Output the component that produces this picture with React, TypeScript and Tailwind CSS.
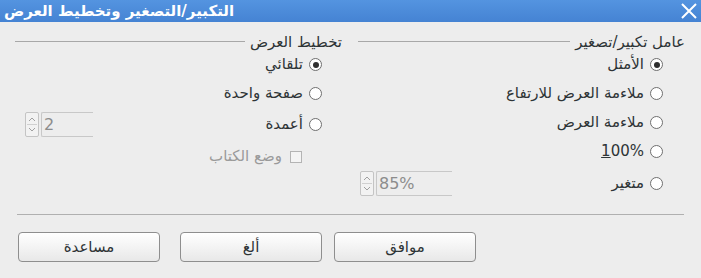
import React from 'react';

const font = { fontFamily: '"DejaVu Sans", "Noto Sans", sans-serif' };

function Radio({ checked }: { checked?: boolean }) {
	return (
		<span className="w-[13px] h-[13px] rounded-full border border-[#6f6f6f] bg-white flex items-center justify-center shrink-0">
			{checked && <span className="w-[6px] h-[6px] rounded-full bg-[#2e2e2e]" />}
		</span>
	);
}

function Spin({ value, width }: { value: string; width: string }) {
	return (
		<div dir="ltr" className="flex items-stretch h-[25px]">
			<div className="w-[14px] border border-[#c4c4c4] rounded-[2px] flex flex-col items-center justify-center bg-[#f2f2f2]">
				<svg width="8" height="5" viewBox="0 0 8 5"><path d="M1 4 L4 1 L7 4" fill="none" stroke="#a0a0a0" strokeWidth="1" /></svg>
				<div className="h-px w-[10px] bg-[#d0d0d0] my-[2px]" />
				<svg width="8" height="5" viewBox="0 0 8 5"><path d="M1 1 L4 4 L7 1" fill="none" stroke="#a0a0a0" strokeWidth="1" /></svg>
			</div>
			<div className={`${width} ml-[2px] border border-[#c8c8c8] border-r-0 rounded-l-[2px] flex items-center pl-[2px] text-[#8c8c8c] text-[16px]`}>
				{value}
			</div>
		</div>
	);
}

function Row({ label, checked, h, extra }: { label: React.ReactNode; checked?: boolean; h: string; extra?: React.ReactNode }) {
	return (
		<div className={`flex items-center ${h}`}>
			<Radio checked={checked} />
			<span className="mr-[6px] text-[#2e3436]">{label}</span>
			{extra && <div className="mr-auto">{extra}</div>}
		</div>
	);
}

function Header({ title }: { title: string }) {
	return (
		<div className="flex items-center h-[16px]">
			<span className="text-[#2e3436] whitespace-nowrap">{title}</span>
			<div className="flex-1 h-px bg-[#a8a8a8] mr-[5px] mt-[-2px]" />
		</div>
	);
}

function Button({ label }: { label: string }) {
	return (
		<button className="w-[142px] h-[30px] rounded-[4px] border border-[#8e8e8e] bg-gradient-to-b from-[#ffffff] to-[#e8e8e8] text-[#2e3436] text-[15px]">
			{label}
		</button>
	);
}

export default function App() {
	return (
		<div className="w-[701px] h-[278px] bg-[#ededed] overflow-hidden text-[15px]" style={font}>
			<div className="h-[22px] bg-gradient-to-b from-[#5494e0] to-[#4583d3] flex items-center justify-between pl-[4px] pr-[3px]">
				<span className="text-white font-bold text-[15px] leading-none">التكبير/التصغير وتخطيط العرض</span>
				<svg width="18" height="18" viewBox="0 0 18 18">
					<path d="M2 2 L16 16 M16 2 L2 16" stroke="white" strokeWidth="2" />
				</svg>
			</div>

			<div dir="rtl" className="flex pt-[12px] pr-[16px] pl-[15px] gap-[16px]">
				<div className="w-[327px] flex flex-col">
					<Header title="عامل تكبير/تصغير" />
					<div className="pr-[22px]">
						<Row h="h-[29px]" checked label="الأمثل" />
						<Row h="h-[29px]" label="ملاءمة العرض للارتفاع" />
						<Row h="h-[29px]" label="ملاءمة العرض" />
						<Row h="h-[29px]" label={<span dir="ltr"><span className="underline">1</span>00%</span>} />
						<Row h="h-[35px]" label="متغير" extra={<div className="ml-[2px]"><Spin value="85%" width="w-[76px]" /></div>} />
					</div>
				</div>
				<div className="w-[327px] flex flex-col">
					<Header title="تخطيط العرض" />
					<div className="pr-[20px]">
						<Row h="h-[29px]" checked label="تلقائي" />
						<Row h="h-[29px]" label="صفحة واحدة" />
						<Row h="h-[33px]" label="أعمدة" extra={<div className="ml-[10px]"><Spin value="2" width="w-[52px]" /></div>} />
						<div className="flex items-center h-[31px] pr-[20px]">
							<span className="w-[12px] h-[12px] border border-[#b4b4b4] bg-[#f4f4f4] shrink-0" />
							<span className="mr-[8px] text-[#9a9a9a]">وضع الكتاب</span>
						</div>
					</div>
				</div>
			</div>

			<div className="mx-[17px] mt-[13px] h-px bg-[#b0b0b0]" />

			<div className="flex gap-[20px] pl-[18px] pt-[17px]">
				<Button label="مساعدة" />
				<div className="flex gap-[12px]">
					<Button label="ألغ" />
					<Button label="موافق" />
				</div>
			</div>
		</div>
	);
}
